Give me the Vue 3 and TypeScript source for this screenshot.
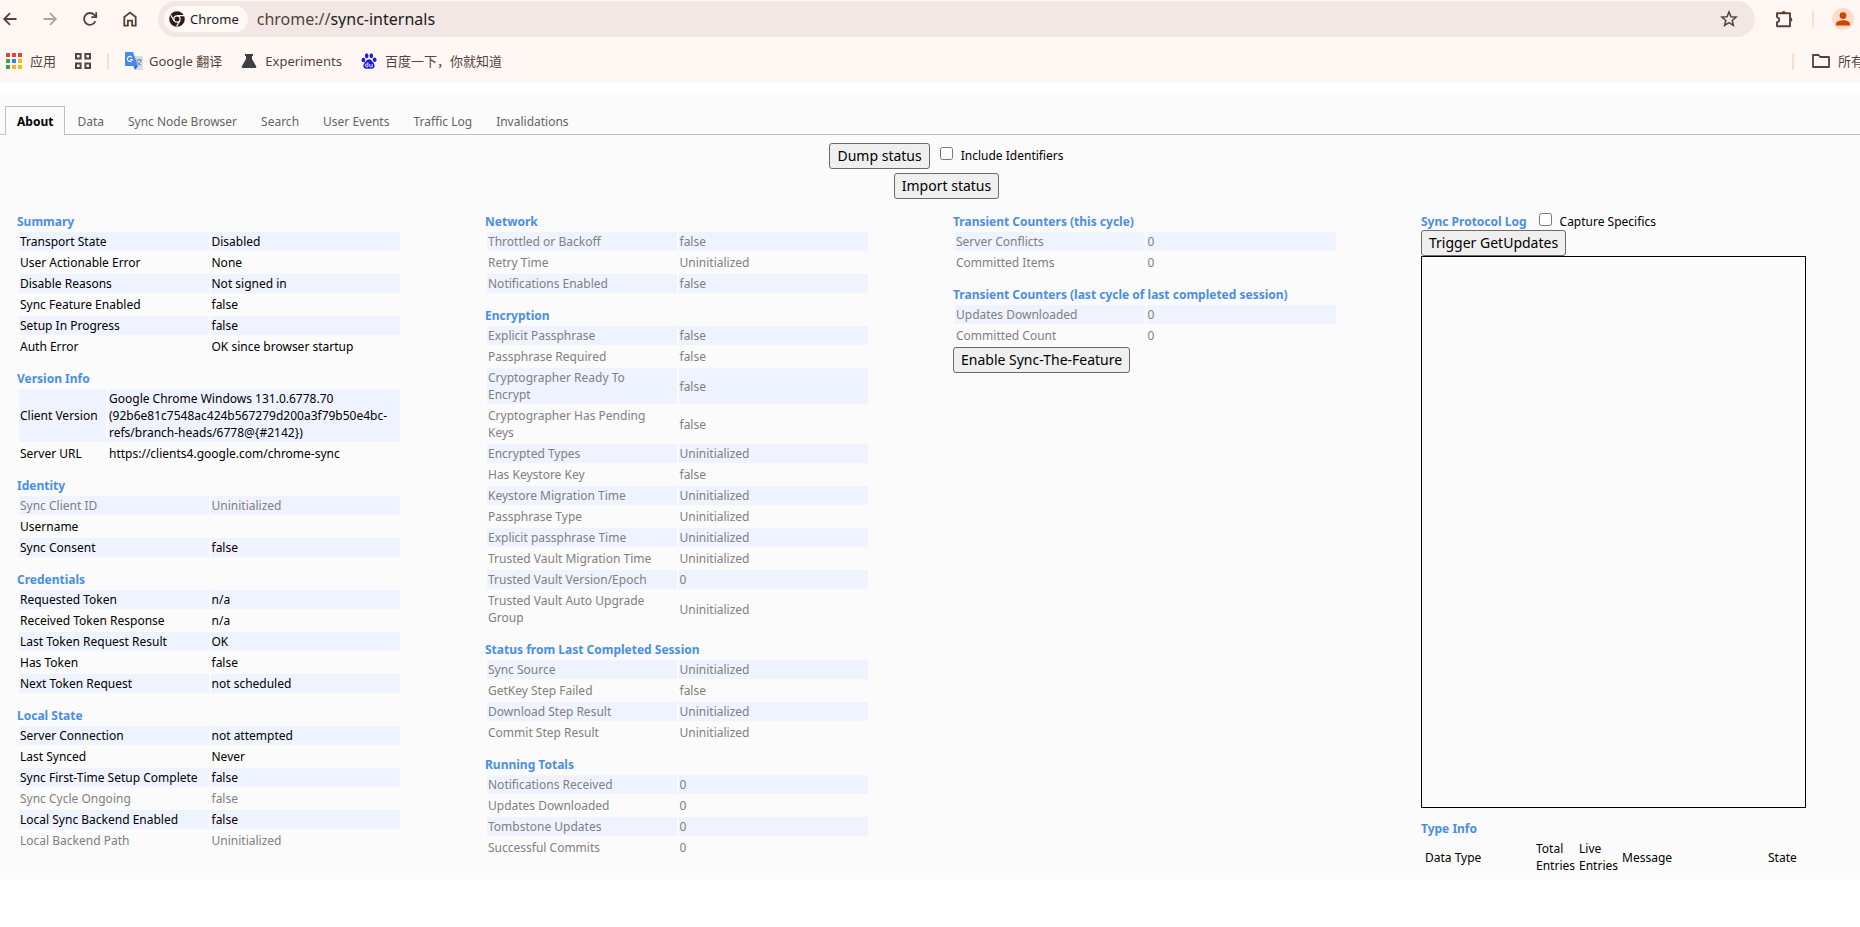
<script setup lang="ts">
import { ref } from 'vue'

interface Row {
  label: string
  value: string
  muted?: boolean
}
interface Section {
  title: string
  rows: Row[]
  narrow?: boolean
}

const on = (label: string, value: string): Row => ({ label, value })
const off = (label: string, value: string): Row => ({ label, value, muted: true })

const address = ref('sync-internals')
const includeIds = ref(false)
const captureSpecifics = ref(false)
const activeTab = ref('About')

const tabs = ['About', 'Data', 'Sync Node Browser', 'Search', 'User Events', 'Traffic Log', 'Invalidations']

const columns: Section[][] = [
  [
    {
      title: 'Summary',
      rows: [
        on('Transport State', 'Disabled'),
        on('User Actionable Error', 'None'),
        on('Disable Reasons', 'Not signed in'),
        on('Sync Feature Enabled', 'false'),
        on('Setup In Progress', 'false'),
        on('Auth Error', 'OK since browser startup'),
      ],
    },
    {
      title: 'Version Info',
      narrow: true,
      rows: [
        on(
          'Client Version',
          'Google Chrome Windows 131.0.6778.70 (92b6e81c7548ac424b567279d200a3f79b50e4bc-refs/branch-heads/6778@{#2142})',
        ),
        on('Server URL', 'https://clients4.google.com/chrome-sync'),
      ],
    },
    {
      title: 'Identity',
      rows: [off('Sync Client ID', 'Uninitialized'), on('Username', ''), on('Sync Consent', 'false')],
    },
    {
      title: 'Credentials',
      rows: [
        on('Requested Token', 'n/a'),
        on('Received Token Response', 'n/a'),
        on('Last Token Request Result', 'OK'),
        on('Has Token', 'false'),
        on('Next Token Request', 'not scheduled'),
      ],
    },
    {
      title: 'Local State',
      rows: [
        on('Server Connection', 'not attempted'),
        on('Last Synced', 'Never'),
        on('Sync First-Time Setup Complete', 'false'),
        off('Sync Cycle Ongoing', 'false'),
        on('Local Sync Backend Enabled', 'false'),
        off('Local Backend Path', 'Uninitialized'),
      ],
    },
  ],
  [
    {
      title: 'Network',
      rows: [
        off('Throttled or Backoff', 'false'),
        off('Retry Time', 'Uninitialized'),
        off('Notifications Enabled', 'false'),
      ],
    },
    {
      title: 'Encryption',
      rows: [
        off('Explicit Passphrase', 'false'),
        off('Passphrase Required', 'false'),
        off('Cryptographer Ready To\nEncrypt', 'false'),
        off('Cryptographer Has Pending\nKeys', 'false'),
        off('Encrypted Types', 'Uninitialized'),
        off('Has Keystore Key', 'false'),
        off('Keystore Migration Time', 'Uninitialized'),
        off('Passphrase Type', 'Uninitialized'),
        off('Explicit passphrase Time', 'Uninitialized'),
        off('Trusted Vault Migration Time', 'Uninitialized'),
        off('Trusted Vault Version/Epoch', '0'),
        off('Trusted Vault Auto Upgrade\nGroup', 'Uninitialized'),
      ],
    },
    {
      title: 'Status from Last Completed Session',
      rows: [
        off('Sync Source', 'Uninitialized'),
        off('GetKey Step Failed', 'false'),
        off('Download Step Result', 'Uninitialized'),
        off('Commit Step Result', 'Uninitialized'),
      ],
    },
    {
      title: 'Running Totals',
      rows: [
        off('Notifications Received', '0'),
        off('Updates Downloaded', '0'),
        off('Tombstone Updates', '0'),
        off('Successful Commits', '0'),
      ],
    },
  ],
  [
    {
      title: 'Transient Counters (this cycle)',
      rows: [off('Server Conflicts', '0'), off('Committed Items', '0')],
    },
    {
      title: 'Transient Counters (last cycle of last completed session)',
      rows: [off('Updates Downloaded', '0'), off('Committed Count', '0')],
    },
  ],
]
</script>

<template>
  <div class="window">
    <header class="chrome">
      <div class="toolbar">
        <nav class="nav" aria-label="Navigation">
          <button class="icon-btn" type="button" aria-label="Back">
            <svg width="20" height="20" viewBox="0 0 20 20" fill="none" stroke="#5a4034" stroke-width="1.8"><path d="M16.5 10H4.5M10 4.2 4.2 10l5.8 5.8" /></svg>
          </button>
          <button class="icon-btn" type="button" aria-label="Forward">
            <svg width="20" height="20" viewBox="0 0 20 20" fill="none" stroke="#b0a39d" stroke-width="1.8"><path d="M3.5 10h12M10 4.2l5.8 5.8-5.8 5.8" /></svg>
          </button>
          <button class="icon-btn" type="button" aria-label="Reload">
            <svg width="20" height="20" viewBox="0 0 20 20" fill="none" stroke="#5a4034" stroke-width="1.8"><path d="M15.4 12.2A5.9 5.9 0 1 1 14.4 6l1.8 1.9" /><path d="M16.2 3.2v4.9h-4.9" /></svg>
          </button>
          <button class="icon-btn" type="button" aria-label="Home">
            <svg width="20" height="20" viewBox="0 0 20 20" fill="none" stroke="#5a4034" stroke-width="1.8"><path d="M4.3 8 10 3.6 15.7 8v8.6h-3.6v-5H7.9v5H4.3z" /></svg>
          </button>
        </nav>
        <div class="omnibox">
          <button class="chip" type="button">
            <svg width="16" height="16" viewBox="0 0 16 16">
              <circle cx="8" cy="8" r="7.8" fill="#2b1d17" />
              <circle cx="8" cy="8" r="3.1" fill="none" stroke="#fff8f5" stroke-width="1.2" />
              <path d="M8 4.6h7M5 9.7 1.7 4M10.9 9.7 7.6 15.4" stroke="#fff8f5" stroke-width="1.2" />
            </svg>
            Chrome
          </button>
          <label class="scheme" for="address">chrome://</label>
          <input id="address" v-model="address" class="address" type="text" spellcheck="false" />
          <button class="icon-btn" type="button" aria-label="Bookmark this tab">
            <svg width="20" height="20" viewBox="0 0 20 20" fill="none" stroke="#54433c" stroke-width="1.5"><path d="m10 3 2 4.7 5.1.4-3.9 3.3 1.2 5-4.4-2.7-4.4 2.7 1.2-5-3.9-3.3 5.1-.4z" /></svg>
          </button>
        </div>
        <div class="actions">
          <button class="icon-btn" type="button" aria-label="Extensions">
            <svg width="20" height="20" viewBox="0 0 20 20"><path d="M3 4.2h13v13H3v-3.9c3-.4 3-4.8 0-5.2z" fill="none" stroke="#5a4034" stroke-width="1.9" stroke-linejoin="round" /><path d="M7.6 4a2.1 2.1 0 0 1 4.2 0zM16.3 8.6a2.1 2.1 0 0 1 0 4.2z" fill="#5a4034" /></svg>
          </button>
          <span class="divider"></span>
          <button class="avatar" type="button" aria-label="Profile">
            <svg width="22" height="22" viewBox="0 0 22 22"><circle cx="11" cy="7.6" r="3.4" fill="#c94700" /><path d="M4 17.5v-1.6c0-2.4 3.6-3.7 7-3.7s7 1.3 7 3.7v1.6z" fill="#c94700" /></svg>
          </button>
        </div>
      </div>

      <div class="bookmarks">
        <a class="bookmark apps" href="#">
          <svg width="16" height="16" viewBox="0 0 16 16">
            <path d="M0 0h4v4H0zM6 0h4v4H6zM12 0h4v4h-4z" fill="#ee4035" />
            <path d="M0 6h4v4H0zM0 12h4v4H0z" fill="#34a058" />
            <path d="M6 6h4v4H6z" fill="#2684f0" />
            <path d="M12 6h4v4h-4zM6 12h4v4H6zM12 12h4v4h-4z" fill="#fbb812" />
          </svg>
          应用
        </a>
        <button class="grid-btn" type="button" aria-label="Tab groups">
          <svg width="16" height="16" viewBox="0 0 16 16" fill="none" stroke="#54433c" stroke-width="2"><path d="M1 1h4.6v4.6H1zM10.4 1H15v4.6h-4.6zM1 10.4h4.6V15H1zM10.4 10.4H15V15h-4.6z" /></svg>
        </button>
        <span class="divider"></span>
        <a class="bookmark translate" href="#">
          <svg width="18" height="18" viewBox="0 0 18 18">
            <path d="M8 4h9a1 1 0 0 1 1 1v12a1 1 0 0 1-1 1h-6z" fill="#d9dde3" />
            <path d="M1 0h7l5 14H1a1 1 0 0 1-1-1V1a1 1 0 0 1 1-1z" fill="#4688f1" />
            <path d="M8.5 14H13l-3 4z" fill="#3367d6" />
            <path d="M6.8 5.3A2.5 2.5 0 1 0 7.3 7.5H5" fill="none" stroke="#fff" stroke-width="1.1" />
            <path d="M11.5 8h5M14 7v1m2 0c-.5 2.4-2 3.8-3 4.7m-1-3.2c.8 1.6 2.4 3 4 3.8" fill="none" stroke="#607d8b" />
          </svg>
          Google 翻译
        </a>
        <a class="bookmark" href="#">
          <svg width="16" height="16" viewBox="0 0 16 16"><path d="M4 1h8v2h-1v3l4 7q1 2-1 2H2q-2 0-1-2l4-7V3H4z" fill="#3c4043" /></svg>
          Experiments
        </a>
        <a class="bookmark" href="#">
          <svg width="16" height="16" viewBox="0 0 16 16">
            <rect width="16" height="16" fill="#fff" />
            <g fill="#2319dc"><ellipse cx="2.4" cy="7" rx="1.9" ry="2.3" /><ellipse cx="5.7" cy="2.7" rx="1.8" ry="2.5" /><ellipse cx="10.3" cy="2.7" rx="1.8" ry="2.5" /><ellipse cx="13.7" cy="6.7" rx="1.9" ry="2.3" /><path d="M8 6.3c2 0 2.5 1.8 4.2 3.2 2 1.7 2.3 6.3-1.4 6.3H5.2C1.5 15.800 1.800 11.200 3.800 9.500 5.500 8.100 6 6.300 8 6.300z" /></g>
            <path d="M6.900 9.300v4.500H5.700a1.300 1.300 0 0 1 0-2.800h1.200M8.700 11v2q0 .8.800.8h1.700V11" fill="none" stroke="#fff" stroke-width=".9" />
          </svg>
          百度一下，你就知道
        </a>
        <div class="bookmarks-end">
          <span class="divider"></span>
          <a class="bookmark all" href="#">
            <svg width="18" height="14" viewBox="0 0 18 14" fill="none" stroke="#54433c" stroke-width="1.8" stroke-linejoin="round"><path d="M1 1h5.500l1.800 2H17v10H1z" /></svg>
            所有
          </a>
        </div>
      </div>
    </header>

    <main class="page">
      <div class="tabs" role="tablist">
        <button
          v-for="tab in tabs"
          :key="tab"
          type="button"
          role="tab"
          class="tab"
          :class="{ active: tab === activeTab }"
          :aria-selected="tab === activeTab"
          @click="activeTab = tab"
        >
          {{ tab }}
        </button>
      </div>

      <div class="controls">
        <div class="control-line">
          <button class="btn" type="button">Dump status</button>
          <label class="check"><input v-model="includeIds" type="checkbox" /><span>Include Identifiers</span></label>
        </div>
        <button class="btn" type="button">Import status</button>
      </div>

      <div class="columns">
        <div v-for="(column, index) in columns" :key="index" class="column">
          <section v-for="section in column" :key="section.title">
            <h2>{{ section.title }}</h2>
            <table :class="{ narrow: section.narrow }">
              <tbody>
                <tr v-for="row in section.rows" :key="row.label" :class="{ muted: row.muted }">
                  <th scope="row">{{ row.label }}</th>
                  <td>{{ row.value }}</td>
                </tr>
              </tbody>
            </table>
            <button v-if="section.title.includes('last cycle')" class="btn" type="button">Enable Sync-The-Feature</button>
          </section>
        </div>

        <div class="column">
          <section>
            <div class="log-head">
              <h2>Sync Protocol Log</h2>
              <label class="check"><input v-model="captureSpecifics" type="checkbox" /><span>Capture Specifics</span></label>
            </div>
            <button class="btn" type="button">Trigger GetUpdates</button>
            <div class="log"></div>
          </section>
          <section>
            <h2>Type Info</h2>
            <table class="types">
              <thead>
                <tr>
                  <th class="type">Data Type</th>
                  <th class="count">Total Entries</th>
                  <th class="count">Live Entries</th>
                  <th>Message</th>
                  <th class="state">State</th>
                </tr>
              </thead>
            </table>
          </section>
        </div>
      </div>
    </main>
  </div>
</template>

<style>
body {
  margin: 0;
  background: #fff;
}
</style>

<style scoped>
.window {
  overflow: hidden;
  font: 12px/17px 'Noto Sans', 'Noto Sans CJK SC', sans-serif;
  color: #000;
}
button {
  font-family: inherit;
  cursor: pointer;
}
svg {
  display: block;
  flex: none;
}

/* Browser chrome */
.chrome {
  height: 83px;
  background: #fff7f4;
}
.toolbar {
  display: flex;
  align-items: center;
  padding-top: 1px;
}
.nav {
  display: flex;
  gap: 20px;
  padding: 0 18px 0 0;
}
.icon-btn,
.grid-btn,
.avatar {
  padding: 0;
  border: 0;
  background: none;
}
.omnibox {
  flex: 1;
  display: flex;
  align-items: center;
  height: 36px;
  box-sizing: border-box;
  padding: 0 16px 0 6px;
  border-radius: 18px;
  background: #f2e7e4;
}
.chip {
  display: flex;
  align-items: center;
  gap: 5px;
  height: 26px;
  padding: 0 9px 0 5px;
  border: 0;
  border-radius: 13px;
  background: #fff8f5;
  color: #201a18;
  font-size: 13px;
}
.scheme {
  margin-left: 9px;
  font-size: 16px;
  color: #54433c;
}
.address {
  flex: 1;
  padding: 0;
  border: 0;
  outline: 0;
  background: none;
  font: inherit;
  font-size: 16px;
  color: #201a18;
}
.actions {
  display: flex;
  align-items: center;
  gap: 18px;
  padding: 0 6px 0 19px;
}
.actions .divider {
  width: 2px;
}
.divider {
  flex: none;
  width: 2px;
  height: 17px;
  border-radius: 1px;
  background: #ffdbc9;
}
.avatar {
  border-radius: 50%;
  background: #ffdbc9;
}
.bookmarks {
  display: flex;
  align-items: center;
  height: 48px;
  padding-left: 6px;
  font-size: 13px;
}
.bookmark {
  display: flex;
  align-items: center;
  gap: 8px;
  margin-right: 19px;
  color: #54433c;
  text-decoration: none;
  white-space: nowrap;
}
.grid-btn {
  margin-right: 16px;
}
.translate {
  gap: 6px;
  margin-left: 16px;
}
.bookmarks-end {
  display: flex;
  align-items: center;
  gap: 18px;
  width: 68px;
  margin-left: auto;
}

/* Page */
.page {
  margin-top: 9px;
  padding-bottom: 2px;
  background: #fbfbfb;
}
.tabs {
  display: flex;
  align-items: flex-end;
  padding: 14px 5px 0;
  border-bottom: 1px solid #c0c0c0;
}
.tab {
  padding: 6px 11px 4px;
  border: 1px solid transparent;
  border-bottom: 0;
  background: none;
  color: #646464;
  font-size: 12px;
  line-height: 17px;
}
.tab.active {
  margin-bottom: -1px;
  padding-bottom: 5px;
  border-color: #c0c0c0;
  background: #fbfbfb;
  color: #000;
  font-weight: 700;
}
.controls {
  display: flex;
  flex-direction: column;
  align-items: center;
  gap: 4px;
  padding: 8px 0 14px 33px;
}
.control-line {
  display: flex;
  gap: 10px;
}
.check {
  display: flex;
  gap: 8px;
}
.check input {
  width: 13px;
  height: 13px;
  margin: 0;
}
.control-line .check {
  padding-top: 4px;
}
.btn {
  display: block;
  height: 26px;
  padding: 0 7px;
  border: 1px solid #6b6b6b;
  border-radius: 3px;
  background: #efefef;
  color: #000;
  font-size: 14px;
  line-height: 20px;
}
.columns {
  display: grid;
  grid-template-columns: repeat(4, minmax(0, 1fr));
  gap: 83px;
  padding: 0 54px 0 17px;
}
.column {
  display: flex;
  flex-direction: column;
  gap: 12px;
}
h2 {
  margin: 0;
  color: #4a8ee6;
  font-size: 12px;
  line-height: 17px;
  font-weight: 700;
}
table {
  width: 100%;
  table-layout: fixed;
  border-spacing: 2px;
}
th,
td {
  padding: 1px;
  font-weight: 400;
  text-align: left;
}
tbody th {
  white-space: pre-line;
}
td {
  height: 17px;
}
tbody tr:nth-child(odd) > * {
  background: #eff3ff;
}
.muted {
  color: #808080;
}
.narrow th {
  width: 85px;
}
.log-head {
  display: flex;
  gap: 12px;
}
.log {
  height: 550px;
  border: 1px solid #000;
}
.types th {
  padding: 1px 2px;
}
.types .type {
  width: 105px;
}
.types .count {
  width: 37px;
}
.types .state {
  width: 34px;
}
</style>
